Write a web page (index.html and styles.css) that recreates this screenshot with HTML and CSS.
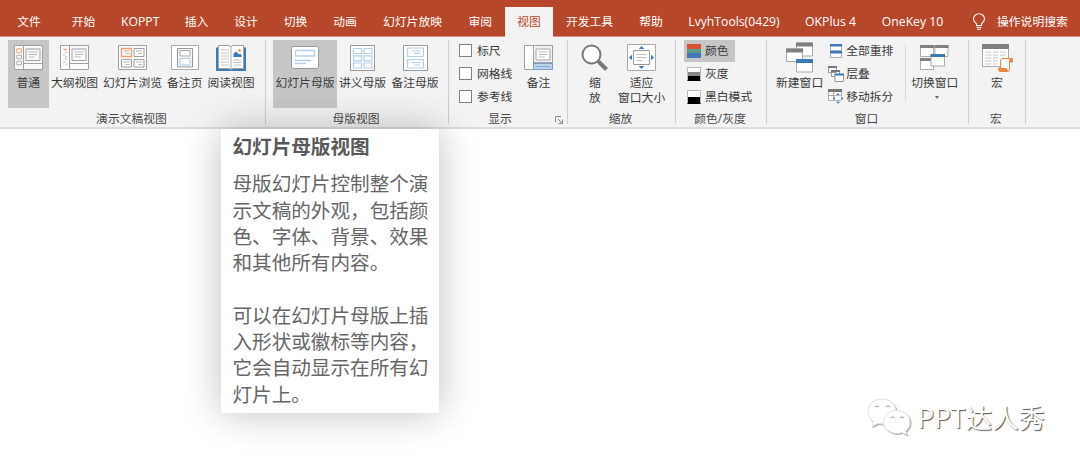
FILE: index.html
```html
<!DOCTYPE html>
<html lang="zh-CN">
<head>
    <meta charset="UTF-8">
    <meta name="viewport" content="width=device-width, initial-scale=1.0">
    <title>幻灯片母版视图</title>
    <link rel="stylesheet" href="styles.css">
</head>
<body>
    <header>
        <nav class="tabs">
            <a>文件</a>
            <a>开始</a>
            <a class="latin">KOPPT</a>
            <a>插入</a>
            <a>设计</a>
            <a>切换</a>
            <a>动画</a>
            <a>幻灯片放映</a>
            <a>审阅</a>
            <a class="active">视图</a>
            <a>开发工具</a>
            <a>帮助</a>
            <a class="latin">LvyhTools(0429)</a>
            <a class="latin">OKPlus 4</a>
            <a class="latin">OneKey 10</a>
        </nav>
        <div class="search">
            <svg width="14" height="18" viewBox="0 0 14 18" fill="none" stroke="#fff" stroke-width="1.1">
                <path d="M4.5 12.5V11C3.5 9.5 1.5 8.500 1.500 6a5.500 5.300 0 0 1 11 0C12.500 8.500 10.500 9.500 9.500 11v1.500z"/>
                <path d="M4.500 14.300h5M5 16.200h4"/>
            </svg>
            <span>操作说明搜索</span>
        </div>
    </header>

    <div class="ribbon">
        <!-- 演示文稿视图 -->
        <section class="group group-views">
            <div class="tools">
                <div class="button selected">
                    <div class="icon"><svg width="29" height="25" viewBox="0 0 29 25" fill="#f8f8f8" stroke="#a0a0a0">
                        <path d="M.5.5h28v24H.5zM9.500.5v24M9.500 18.500h19"/>
                        <path d="M12 4h14v11.500H12z"/><path d="M14.500 7h9M14.500 9.500h9M14.500 12h6" stroke="#aaa" stroke-width=".8"/>
                        <path d="M2.800 3.800h4.700v4H2.800z" stroke="#f0a070"/>
                        <path d="M2.800 10.300h4.700v3.500H2.800zM2.800 16.300h4.700v3.500H2.800z" stroke="#b0b0b0"/>
                    </svg></div>
                    <span>普通</span>
                </div>
                <div class="button">
                    <div class="icon"><svg width="29" height="25" viewBox="0 0 29 25" fill="#fbfbfb" stroke="#a0a0a0">
                        <path d="M.5.5h28v24H.5zM9.500.5v24M9.500 18.500h19"/>
                        <path d="M12 4h14v11.500H12z"/><path d="M14.500 7h9M14.500 9.500h9M14.500 12h6" stroke="#aaa" stroke-width=".8"/>
                        <path d="M3.500 4.500h3" stroke="#f0a070" stroke-width="1.500"/>
                        <path d="M5 7.500h2M3 10h2M5 12h2M5 14h2M3 17h2M5 19h2" stroke="#b0b0b0" stroke-width=".9"/>
                    </svg></div>
                    <span>大纲视图</span>
                </div>
                <div class="button">
                    <div class="icon"><svg width="29" height="25" viewBox="0 0 29 25" fill="#fbfbfb" stroke="#a0a0a0">
                        <path d="M.5.5h28v24H.5z"/>
                        <path d="M16 3.500h10v8H16zM3.500 14.500h10v7.500h-10zM16 14.500h10V22H16z"/>
                        <path d="M3.500 3.500h10v8h-10z" stroke="#f0a070" stroke-width="1.300"/>
                        <path d="M18 6h6M20 8.500h4M5.500 17h6M7.500 19.500h4M18 17h6M20 19.500h4" stroke="#aaa" stroke-width=".8"/>
                        <path d="M5.500 6h6M7.500 8.500h4" stroke="#b8a090" stroke-width=".8"/>
                    </svg></div>
                    <span>幻灯片浏览</span>
                </div>
                <div class="button">
                    <div class="icon"><svg width="28" height="25" viewBox="0 0 28 25" fill="#fff" stroke="#aaa">
                        <path d="M.5.5h27v24H.5z"/>
                        <path d="M6.500 3.500h15v18.500h-15z" fill="#f6f6f6" stroke="#999"/>
                        <path d="M9 5.500h10v5.500H9z"/>
                        <path d="M9 13.500h10v6.500H9z" stroke="#a9c8e8"/>
                    </svg></div>
                    <span>备注页</span>
                </div>
                <div class="button">
                    <div class="icon"><svg width="30" height="26" viewBox="0 0 30 26">
                        <path d="M0 2.500h3V23h10l2 1.500 2-1.500h10V2.500h3V26H0z" fill="#3e79b8"/>
                        <path d="M2.500.5H12q2.500 0 3 1.500Q15.500.5 18 .5h9.500v23H18q-2.500 0-3 1-.5-1-3-1H2.500z" fill="#fff" stroke="#a0a0a0"/>
                        <path d="M15 2v22" stroke="#aaa"/>
                        <path d="M5 5h8M5 8h8M5 11h8M5 14h8M5 17h8M5 20h8M17.500 15h8M17.500 17.500h8M17.500 20h8" stroke="#bbb" stroke-width=".9"/>
                        <path d="M17.500 12V8.500l2.500-2 3 3 1-1 1.500 1.500v2z" fill="#3e79b8"/>
                        <circle cx="23.500" cy="5.500" r="1.400" fill="#f0a050"/>
                    </svg></div>
                    <span>阅读视图</span>
                </div>
            </div>
            <div class="group-name">演示文稿视图</div>
        </section>

        <!-- 母版视图 -->
        <section class="group group-master">
            <div class="tools">
                <div class="button selected">
                    <div class="icon"><svg width="28" height="23" viewBox="0 0 28 23" fill="none">
                        <rect x=".5" y=".5" width="27" height="22" rx="2" fill="#fff" stroke="#999"/>
                        <path d="M4.500 4.500h19v5.500h-19zM4 14.500h16M4 17.500h11" stroke="#b4cfea" stroke-width="1.300"/>
                    </svg></div>
                    <span>幻灯片母版</span>
                </div>
                <div class="button">
                    <div class="icon"><svg width="25" height="26" viewBox="0 0 25 26" fill="none" stroke="#b4cfea" stroke-width="1.200">
                        <path d="M.5.5h24v25H.5z" fill="#fff" stroke="#999" stroke-width="1"/>
                        <path d="M3.500 3.500h8v5h-8zM14 3.500h8v5h-8zM3.500 10.800h8v5h-8zM14 10.800h8v5h-8zM3.500 18h8v5h-8zM14 18h8v5h-8z"/>
                    </svg></div>
                    <span>讲义母版</span>
                </div>
                <div class="button">
                    <div class="icon"><svg width="25" height="26" viewBox="0 0 25 26" fill="none" stroke="#b4cfea" stroke-width="1.200">
                        <path d="M.5.5h24v25H.5z" fill="#fff" stroke="#999" stroke-width="1"/>
                        <path d="M4.500 3h16v8.500h-16zM4.500 14.500h16V23h-16zM9 6h8M11 8.500h6M9 17.500h8M11 20h6"/>
                    </svg></div>
                    <span>备注母版</span>
                </div>
            </div>
            <div class="group-name">母版视图</div>
        </section>

        <!-- 显示 -->
        <section class="group group-show">
            <div class="tools">
                <div class="rows">
                    <label class="row"><i class="checkbox"></i>标尺</label>
                    <label class="row"><i class="checkbox"></i>网格线</label>
                    <label class="row"><i class="checkbox"></i>参考线</label>
                </div>
                <div class="button">
                    <div class="icon"><svg width="29" height="25" viewBox="0 0 29 25" fill="#fff" stroke="#a0a0a0">
                        <path d="M.5.5h28v24H.5zM9.500.5v24"/>
                        <path d="M9.500.5h19v17h-19z" fill="#f3f3f3"/>
                        <path d="M12 4h14v11H12z"/><path d="M14.500 7h9M14.500 9.500h9M14.500 12h6" stroke="#aaa" stroke-width=".8"/>
                        <path d="M9.500 18.500h19v6h-19z" fill="#b9d3ee" stroke="#7f9fc2"/><path d="M12 21.500h14" stroke="#8fabc9"/>
                    </svg></div>
                    <span>备注</span>
                </div>
            </div>
            <div class="group-name">显示
                <svg class="launcher" width="8" height="8" viewBox="0 0 8 8" fill="none" stroke="#888">
                    <path d="M.5 6V.5H6M3 3l4 4M7.500 3.500v4h-4"/>
                </svg>
            </div>
        </section>

        <!-- 缩放 -->
        <section class="group group-zoom">
            <div class="tools">
                <div class="button">
                    <div class="icon"><svg width="28" height="28" viewBox="0 0 28 28" fill="none" stroke="#7a7a7a">
                        <path d="M17 17l8.500 8.500" stroke-width="4"/>
                        <circle cx="10.500" cy="10.500" r="9" fill="#fff" stroke-width="2"/>
                    </svg></div>
                    <span>缩<br>放</span>
                </div>
                <div class="button">
                    <div class="icon"><svg width="29" height="27" viewBox="0 0 29 27" fill="#fff" stroke="#aaa">
                        <path d="M.5.5h28v26H.5z"/>
                        <path d="M6.500 6.500h16v14h-16z" stroke="#999"/><path d="M9.500 10.500h10M9.500 13.500h10M9.500 16.500h6" stroke="#bbb" stroke-width=".9"/>
                        <path d="M14.500 2l2.800 3h-5.600zM14.500 25l2.800-3h-5.600zM2 13.500l3-2.800v5.600zM27 13.500l-3-2.800v5.600z" fill="#3e79b8" stroke="none"/>
                    </svg></div>
                    <span>适应<br>窗口大小</span>
                </div>
            </div>
            <div class="group-name">缩放</div>
        </section>

        <!-- 颜色/灰度 -->
        <section class="group group-color">
            <div class="tools">
                <div class="rows">
                    <div class="row selected"><i class="swatch swatch-color"></i>颜色</div>
                    <div class="row"><i class="swatch swatch-gray"></i>灰度</div>
                    <div class="row"><i class="swatch swatch-black"></i>黑白模式</div>
                </div>
            </div>
            <div class="group-name">颜色/灰度</div>
        </section>

        <!-- 窗口 -->
        <section class="group group-window">
            <div class="tools">
                <div class="button">
                    <div class="icon"><svg width="28" height="31" viewBox="0 0 28 31" fill="#fff" stroke="#aaa">
                        <path d="M10.500 1h16v13h-16z"/><path d="M10 .5h17v4H10z" fill="#808080" stroke="none"/>
                        <path d="M.5 7h16v12.500H.5z"/><path d="M0 6.500h17v4H0z" fill="#808080" stroke="none"/>
                        <path d="M10.500 17.500h16V30h-16z"/><path d="M10 17h17v4H10z" fill="#3e79b8" stroke="none"/>
                    </svg></div>
                    <span>新建窗口</span>
                </div>
                <div class="rows">
                    <div class="row"><svg width="16" height="14" viewBox="0 0 16 14" fill="#fff" stroke="#aaa">
                        <path d="M2.500.5h11v6h-11zM2.500 7.500h11v6h-11z"/><path d="M2 0h12v2.500H2zM2 7h12v2.500H2z" fill="#3e79b8" stroke="none"/>
                    </svg>全部重排</div>
                    <div class="row"><svg width="16" height="16" viewBox="0 0 16 16" fill="#fff" stroke="#999">
                        <path d="M.5.5h8v6h-8zM3.500 4.500h8v6h-8z"/><path d="M0 1h9M3 5h9" stroke="#777" stroke-width="1.800"/>
                        <path d="M7 8.500h8.500v7H7z"/><path d="M6.500 8.500h9.500" stroke="#3e79b8" stroke-width="2"/>
                    </svg>层叠</div>
                    <div class="row"><svg width="16" height="15" viewBox="0 0 16 15" fill="#fff" stroke="#aaa">
                        <path d="M.5.5h13v11H.5zM5.500 3v8M1 6.500h12"/><path d="M0 0h14v3H0z" fill="#777" stroke="none"/>
                        <path d="M10 4l2.500 2.500h-5zM10 15l2.500-2.500h-5zM4.500 9.500L7 7v5zM15.500 9.500L13 7v5z" fill="#3e79b8" stroke="#f3f3f3" stroke-width=".5"/>
                    </svg>移动拆分</div>
                </div>
                <div class="divider"></div>
                <div class="button">
                    <div class="icon"><svg width="29" height="26" viewBox="0 0 29 26" fill="#fff" stroke="#aaa">
                        <path d="M.5.5h13v11H.5zM15 .5h13v11H15zM.5 13.500h13v11H.5z"/>
                        <path d="M0 0h14v3H0zM14.500 0h14v3h-14zM0 13h14v3H0z" fill="#808080" stroke="none"/>
                        <path d="M11 9.500h13.500v11.500H11z"/><path d="M10.500 9H25v3H10.500z" fill="#3e79b8" stroke="none"/>
                    </svg></div>
                    <span>切换窗口</span>
                    <i class="arrow"></i>
                </div>
            </div>
            <div class="group-name">窗口</div>
        </section>

        <!-- 宏 -->
        <section class="group group-macro">
            <div class="tools">
                <div class="button">
                    <div class="icon"><svg width="31" height="28" viewBox="0 0 31 28" fill="#fff" stroke="#aaa">
                        <path d="M.5.5h26v22H.5z"/><path d="M0 0h27v5H0z" fill="#808080" stroke="none"/>
                        <path d="M3.500 8h6M11 8h5M18 8h6M3.500 11h6M11 11h5M18 11h6M3.500 14h6M11 14h5M3.500 17h6M11 17h5M3.500 20h6M11 20h4" stroke="#c4c4c4"/>
                        <path d="M28 14.500h2.500v3.500H28zM16.500 24h9v3.500h-8q-1.500-1.500-1-3.500z" fill="#ee8744" stroke="#ee8744"/>
                        <path d="M18.500 24.500V17q0-2.500 2.500-2.500h8q-1.500.5-1.500 2.500v8q0 2.500-2 2.500 0-3-1.500-3z" stroke="#ee8744"/>
                    </svg></div>
                    <span>宏</span>
                </div>
            </div>
            <div class="group-name">宏</div>
        </section>
    </div>

    <div class="tooltip">
        <h3>幻灯片母版视图</h3>
        <p>母版幻灯片控制整个演示文稿的外观，包括颜色、字体、背景、效果和其他所有内容。</p>
        <p>可以在幻灯片母版上插入形状或徽标等内容，它会自动显示在所有幻灯片上。</p>
    </div>

    <footer class="watermark">
        <svg width="44" height="38" viewBox="0 0 44 38" fill="#fff" stroke="#e0e0e0">
            <path d="M15 1C7 1 1 6.500 1 13.500c0 4.500 2 8 5.500 10L5 28.500l6-3c9 2 18-2.500 18-12C29 6.500 23 1 15 1z"/>
            <path d="M30 12.500c-7.500 0-13.500 5-13.500 11.500S22.500 35.500 30 35.500c2 0 3.500-.5 5-1l5 2.500-1.500-4c3-2 4.500-5 4.500-9 0-6.500-5.500-11.500-13-11.500z"/>
            <path d="M8 9q2-2.500 4 0M19 9q2-2.500 4 0M23.500 20q2-2.500 4 0M33 20q2-2.500 4 0" fill="none" stroke="#999"/>
        </svg>
        <span>PPT达人秀</span>
    </footer>
</body>
</html>
```
FILE: styles.css
```css
* {
    box-sizing: border-box;
}
body {
    margin: 0;
    height: 467px;
    display: flex;
    flex-direction: column;
    position: relative;
    overflow: hidden;
    background-color: #fff;
    color: #3a3a3a;
    font-family: 'Open Sans', 'Noto Sans CJK SC', sans-serif;
    font-size: 11.8px;
    line-height: 15px;
}
svg {
    display: block;
    flex: none;
}
header {
    display: flex;
    height: 37px;
    padding-top: 7px;
    background-color: #b7472a;
    border-bottom: 1px solid #d89482;
    color: #fff;
}
.tabs {
    display: grid;
    grid-template-columns: 58px 51px 62.5px 50px 49px 50px 49px 86px 49.5px 48px 73px 50px 116px 77px 87px;
    margin-right: 1px;
}
.tabs a {
    display: flex;
    align-items: center;
    justify-content: center;
    height: 30px;
    padding-bottom: 1px;
    white-space: nowrap;
}
.tabs .latin {
    font-size: 12.2px;
}
.tabs .active {
    background-color: #f3f3f3;
    color: #b7472a;
}
.search {
    display: flex;
    align-items: center;
    gap: 11px;
    padding-left: 15px;
    height: 29px;
}

.ribbon {
    display: flex;
    height: 92px;
    padding-top: 3px;
    background-color: #f3f3f3;
    border-bottom: 2px solid #dedede;
}
.group {
    height: 84px;
    border-right: 1px solid #cfcfcf;
}
.tools {
    display: flex;
    height: 68px;
}
.group-name {
    position: relative;
    height: 16px;
    margin-top: 3px;
    padding-right: 2px;
    text-align: center;
    color: #484848;
}
.launcher {
    position: absolute;
    right: 4px;
    top: 5px;
}
.button {
    display: flex;
    flex-direction: column;
    align-items: center;
    height: 68px;
    text-align: center;
    white-space: nowrap;
}
.button > span {
    display: block;
}
.icon {
    display: flex;
    align-items: center;
    height: 35px;
}
.selected {
    background-color: #c6c6c6;
}
.rows {
    display: flex;
    flex-direction: column;
    gap: 1px;
}
.row {
    display: flex;
    align-items: center;
    height: 22px;
    padding-bottom: 1px;
    white-space: nowrap;
}
.checkbox {
    flex: none;
    width: 13px;
    height: 13px;
    margin-right: 5px;
    background-color: #fff;
    border: 1px solid #808080;
}
.swatch {
    flex: none;
    width: 14px;
    height: 14px;
    margin-right: 4px;
}
.swatch-color {
    background: linear-gradient(#dc5032 33%, #5b9c85 33% 66%, #4377b5 66%);
}
.swatch-gray {
    background: linear-gradient(#fff 33%, #8a8a8a 33% 66%, #000 66%);
    border: 1px solid #bbb;
    border-bottom-color: #000;
}
.swatch-black {
    background: linear-gradient(#fff 50%, #000 50%);
    border: 1px solid #bbb;
    border-bottom-color: #000;
}
.divider {
    width: 1px;
    height: 56px;
    margin-top: 5px;
    background-color: #dadada;
}
.arrow {
    margin: 6px 0 0 4px;
    border: 2.5px solid transparent;
    border-top: 3px solid #666;
    border-bottom: 0;
}

/* widths of the groups */
.group-views {
    width: 266px;
}
.group-views .tools {
    display: grid;
    grid-template-columns: 40.5px 52px 64px 40.5px 52px;
    padding-left: 8px;
}
.group-master {
    width: 183px;
}
.group-master .tools {
    display: grid;
    grid-template-columns: 64px 51px 54px;
    padding-left: 7px;
}
.group-show {
    width: 119px;
}
.group-show .tools {
    padding-left: 10px;
}
.group-show .rows {
    width: 65px;
}
.group-show .group-name {
    padding-right: 16px;
}
.group-zoom {
    width: 108px;
}
.group-zoom .tools {
    padding-left: 13px;
    gap: 9px;
}
.group-zoom .button:first-child {
    width: 28px;
}
.group-color {
    width: 91px;
}
.group-color .tools {
    padding-left: 8px;
}
.group-color .row {
    width: 51px;
    padding-left: 3px;
}
.group-window {
    width: 202px;
}
.group-window .tools {
    padding-left: 9px;
}
.group-window .rows {
    width: 77px;
    margin-left: 5px;
}
.group-window .row {
    gap: 2px;
}
.group-window .divider {
    margin-right: 5px;
}
.group-macro {
    width: 57px;
}
.group-macro .tools {
    justify-content: center;
}

/* screen tip under the ribbon */
.tooltip {
    position: absolute;
    left: 221px;
    top: 129px;
    width: 218px;
    height: 284px;
    padding: 5px 0 0 11.5px;
    background-color: #fff;
    box-shadow: 0 0 36px rgba(0, 0, 0, 0.25);
    color: #666;
    font-size: 19.6px;
    line-height: 26.3px;
}
.tooltip h3 {
    margin: 0 0 11px;
    color: #595959;
    font-size: 19.6px;
}
.tooltip p {
    width: 198px;
    margin: 0 0 26.3px;
}

.watermark {
    display: flex;
    align-items: center;
    gap: 6px;
    margin: auto 35px 31px auto;
    color: #fff;
    font-family: 'Noto Sans CJK SC', sans-serif;
    font-size: 26.4px;
    line-height: 38px;
    text-shadow: 1px 1px 1px #555;
}
.watermark svg {
    filter: drop-shadow(1px 1px 0.5px #aaa);
}
```
